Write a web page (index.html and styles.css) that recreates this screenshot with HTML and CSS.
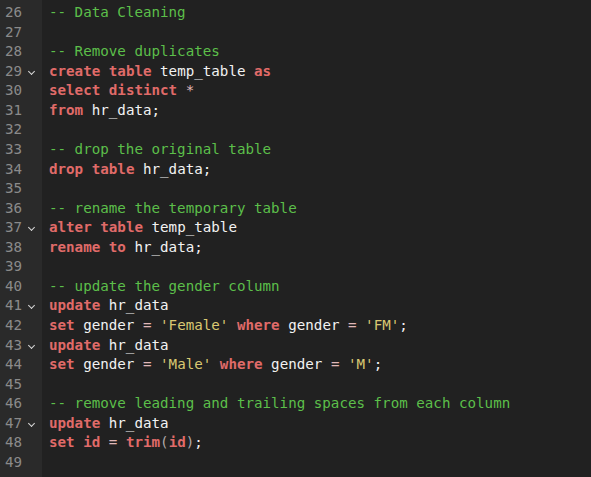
FILE: index.html
```html
<!DOCTYPE html>
<html>
<head>
<meta charset="utf-8">
<link rel="stylesheet" href="styles.css">
</head>
<body>
<div class="editor">
  <div class="gutter">
    <div class="ln">26</div>
    <div class="ln">27</div>
    <div class="ln">28</div>
    <div class="ln fold">29</div>
    <div class="ln">30</div>
    <div class="ln">31</div>
    <div class="ln">32</div>
    <div class="ln">33</div>
    <div class="ln">34</div>
    <div class="ln">35</div>
    <div class="ln">36</div>
    <div class="ln fold">37</div>
    <div class="ln">38</div>
    <div class="ln">39</div>
    <div class="ln">40</div>
    <div class="ln fold">41</div>
    <div class="ln">42</div>
    <div class="ln fold">43</div>
    <div class="ln">44</div>
    <div class="ln">45</div>
    <div class="ln">46</div>
    <div class="ln fold">47</div>
    <div class="ln">48</div>
    <div class="ln">49</div>
  </div>
  <div class="code">
    <div class="line"><span class="c">-- Data Cleaning</span></div>
    <div class="line"> </div>
    <div class="line"><span class="c">-- Remove duplicates</span></div>
    <div class="line"><span class="k">create</span> <span class="k">table</span> temp_table <span class="k">as</span></div>
    <div class="line"><span class="k">select</span> <span class="k">distinct</span> <span class="o">*</span></div>
    <div class="line"><span class="k">from</span> hr_data;</div>
    <div class="line"> </div>
    <div class="line"><span class="c">-- drop the original table</span></div>
    <div class="line"><span class="k">drop</span> <span class="k">table</span> hr_data;</div>
    <div class="line"> </div>
    <div class="line"><span class="c">-- rename the temporary table</span></div>
    <div class="line"><span class="k">alter</span> <span class="k">table</span> temp_table</div>
    <div class="line"><span class="k">rename</span> <span class="k">to</span> hr_data;</div>
    <div class="line"> </div>
    <div class="line"><span class="c">-- update the gender column</span></div>
    <div class="line"><span class="k">update</span> hr_data</div>
    <div class="line"><span class="k">set</span> gender <span class="o">=</span> <span class="s">'Female'</span> <span class="k">where</span> gender <span class="o">=</span> <span class="s">'FM'</span>;</div>
    <div class="line"><span class="k">update</span> hr_data</div>
    <div class="line"><span class="k">set</span> gender <span class="o">=</span> <span class="s">'Male'</span> <span class="k">where</span> gender <span class="o">=</span> <span class="s">'M'</span>;</div>
    <div class="line"> </div>
    <div class="line"><span class="c">-- remove leading and trailing spaces from each column</span></div>
    <div class="line"><span class="k">update</span> hr_data</div>
    <div class="line"><span class="k">set</span> <span class="k">id</span> <span class="o">=</span> <span class="k">trim</span><span class="p">(</span><span class="k">id</span><span class="p">)</span>;</div>
    <div class="line"> </div>
  </div>
</div>
</body>
</html>
```
FILE: styles.css
```css
html, body {
  margin: 0;
  padding: 0;
  background: #212121;
  height: 100%;
}
.editor {
  display: flex;
  height: 477px;
  overflow: hidden;
  font-family: "DejaVu Sans Mono", monospace;
  font-size: 14.2px;
  line-height: 19.57px;
}
.gutter {
  width: 42px;
  background: #2a2a2a;
  padding-top: 3px;
  flex-shrink: 0;
}
.ln {
  position: relative;
  color: #8a8a8a;
  padding-left: 5px;
  height: 19.57px;
}
.fold::after {
  content: "";
  position: absolute;
  left: 29px;
  top: 7px;
  width: 4px;
  height: 4px;
  border-right: 1.6px solid #d8d8d8;
  border-bottom: 1.6px solid #d8d8d8;
  transform: rotate(45deg);
}
.code {
  padding-top: 3px;
  padding-left: 7px;
  color: #f2f2f2;
}
.line {
  height: 19.57px;
  white-space: pre;
}
.k { color: #e06b69; font-weight: bold; }
.c { color: #5cbf4a; }
.s { color: #d9c872; }
.o { color: #e0b8b8; }
.p { color: #b0a8a8; }
```
